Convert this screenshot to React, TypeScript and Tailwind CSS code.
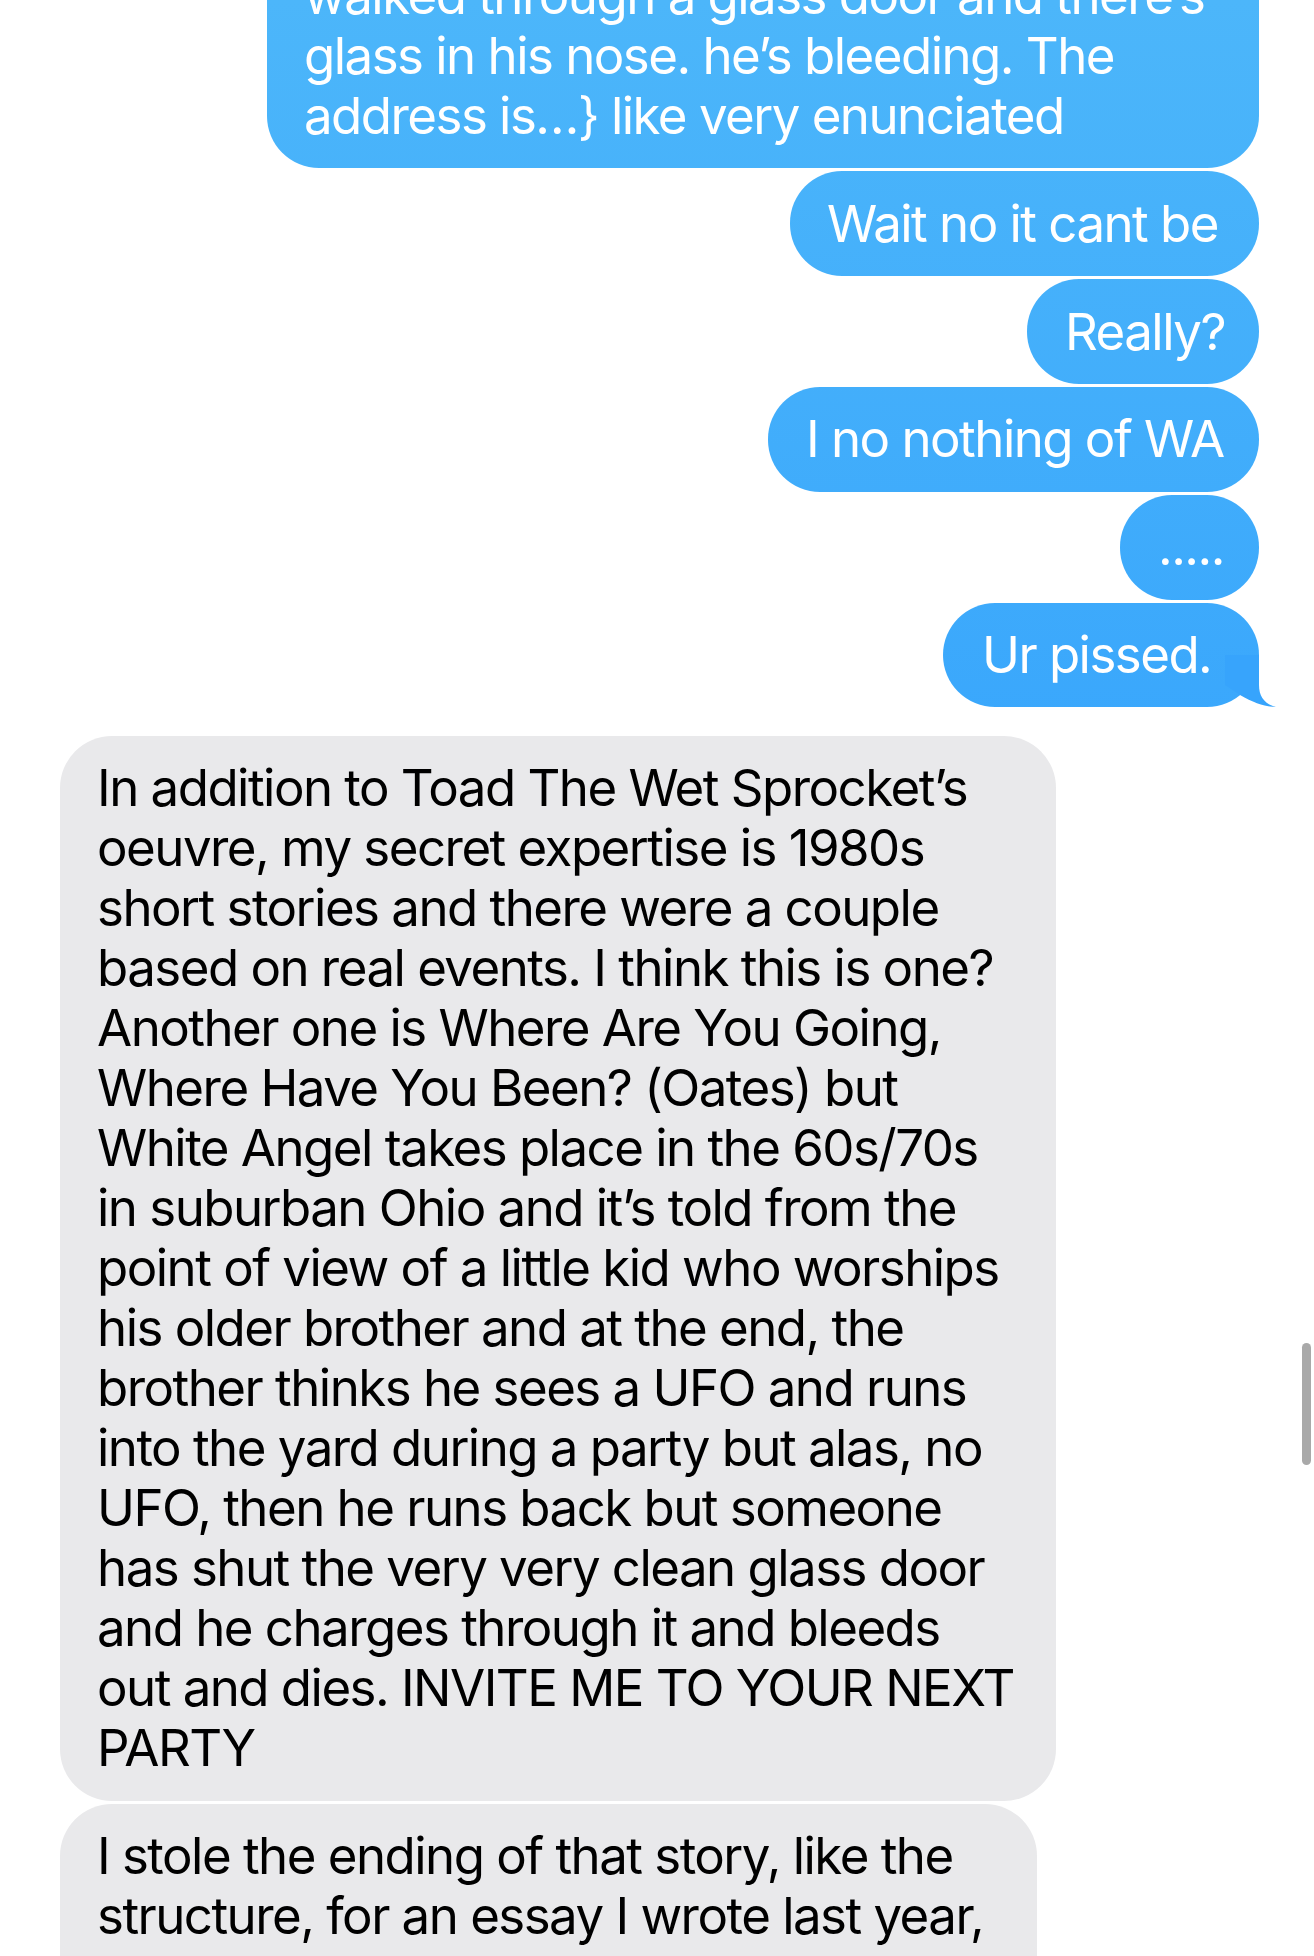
const TEXT = "font-['Inter','Noto_Sans',sans-serif] text-[51px] leading-[60px] tracking-[-0.03em] whitespace-nowrap";

const BLUE = 'bg-linear-to-b from-[#4cb6fa] to-[#168dfe] bg-fixed text-white';
const GRAY = 'bg-[#e9e9eb] text-black';

function Lines({ lines }: { lines: string[] }) {
  return (
    <>
      {lines.map((l, i) => (
        <div key={i}>{l}</div>
      ))}
    </>
  );
}

function Tail() {
  // little hook on the last bubble of a run
  return (
    <svg
      className="absolute right-[-17px] bottom-0 w-[51px] h-[52px]"
      viewBox="0 0 51 52"
      aria-hidden
    >
      <path
        d="M34 0 L34 30 C34 42 40 49 51 52 C40 52 29 48 15 40 L0 30 L0 0 Z"
        fill="#37a4fc"
      />
    </svg>
  );
}

export default function App() {
  return (
    <div className="relative w-full h-[1956px] overflow-hidden bg-white">
      <div className="flex flex-col -mt-[56.5px]">
        {/* outgoing */}
        <div className={`self-end mr-[55px] w-[992px] rounded-[52px] pl-[37px] py-[22.25px] ${BLUE} ${TEXT}`}>
          <Lines
            lines={[
              'walked through a glass door and there’s',
              'glass in his nose. he’s bleeding. The',
              'address is…} like very enunciated',
            ]}
          />
        </div>
        <div className={`self-end mr-[55px] mt-[3.4px] w-[469px] rounded-[52px] pl-[37px] py-[22.25px] ${BLUE} ${TEXT}`}>
          Wait no it cant be
        </div>
        <div className={`self-end mr-[55px] mt-[3.4px] w-[232px] rounded-[52px] pl-[38px] py-[22.25px] ${BLUE} ${TEXT}`}>
          Really?
        </div>
        <div className={`self-end mr-[55px] mt-[3.4px] w-[491px] rounded-[52px] pl-[38px] py-[22.25px] ${BLUE} ${TEXT}`}>
          I no nothing of WA
        </div>
        <div className={`self-end mr-[55px] mt-[3.4px] w-[139px] rounded-[52px] pl-[38px] py-[22.25px] ${BLUE} ${TEXT}`}>
          .....
        </div>
        <div className={`relative self-end mr-[55px] mt-[3.4px] w-[316px] rounded-[52px] pl-[39px] py-[22.25px] ${BLUE} ${TEXT}`}>
          <span className="relative z-10">Ur pissed.</span>
          <Tail />
        </div>

        {/* incoming */}
        <div className={`self-start ml-[60px] mt-[28.5px] w-[996px] rounded-[52px] pl-[37px] py-[22.5px] ${GRAY} ${TEXT}`}>
          <Lines
            lines={[
              'In addition to Toad The Wet Sprocket’s',
              'oeuvre, my secret expertise is 1980s',
              'short stories and there were a couple',
              'based on real events. I think this is one?',
              'Another one is Where Are You Going,',
              'Where Have You Been? (Oates) but',
              'White Angel takes place in the 60s/70s',
              'in suburban Ohio and it’s told from the',
              'point of view of a little kid who worships',
              'his older brother and at the end, the',
              'brother thinks he sees a UFO and runs',
              'into the yard during a party but alas, no',
              'UFO, then he runs back but someone',
              'has shut the very very clean glass door',
              'and he charges through it and bleeds',
              'out and dies. INVITE ME TO YOUR NEXT',
              'PARTY',
            ]}
          />
        </div>
        <div className={`self-start ml-[60px] mt-[3px] w-[977px] rounded-[52px] pl-[37px] pt-[22.5px] pb-[80px] ${GRAY} ${TEXT}`}>
          <Lines
            lines={[
              'I stole the ending of that story, like the',
              'structure, for an essay I wrote last year,',
            ]}
          />
        </div>
      </div>

      {/* scroll indicator */}
      <div className="absolute left-[1302px] top-[1343px] w-[9px] h-[122px] rounded-full bg-[#a9a9a9]" />
    </div>
  );
}
